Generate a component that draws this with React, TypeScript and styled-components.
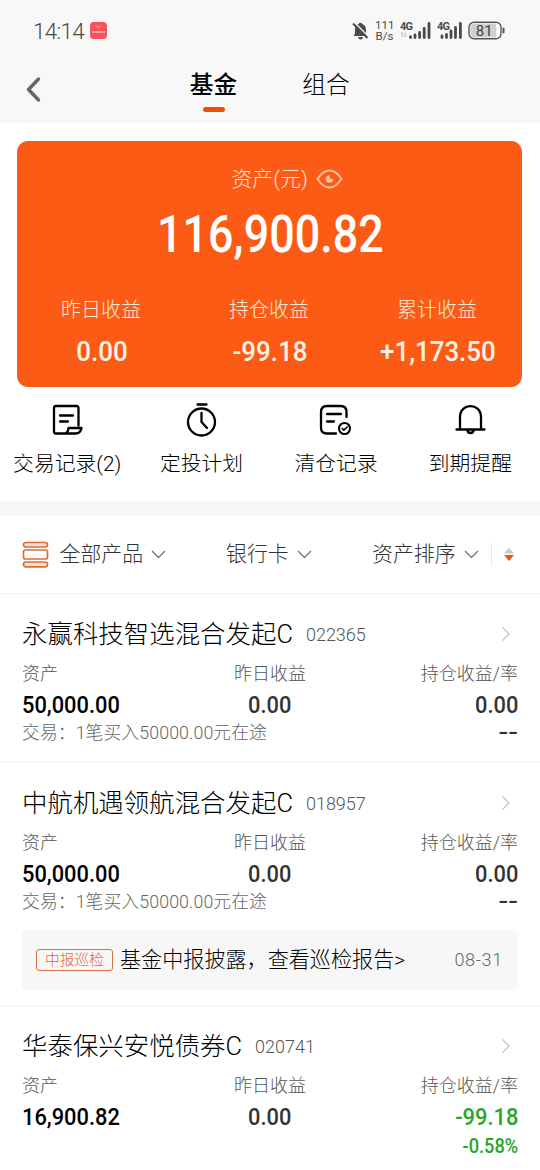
import React from "react";
import styled, { createGlobalStyle } from "styled-components";

const GlobalStyle = createGlobalStyle`
  * { box-sizing: border-box; }
  body {
    margin: 0;
    background: #fff;
    font-family: Roboto, "Noto Sans CJK SC", sans-serif;
    font-weight: 300;
  }
`;

const Screen = styled.div`
  width: 540px;
  height: 1170px;
  overflow: hidden;
  background: #fff;
  white-space: nowrap;
`;

const Header = styled.header`
  height: 123px;
  background: #f8f8f8;
`;

const StatusBar = styled.div`
  display: flex;
  align-items: center;
  height: 60px;
  padding: 1px 34px 0 33px;
  color: #4a4a4a;
`;

const Clock = styled.span`
  width: 57px;
  font-size: 22.5px;
  line-height: 24px;
  letter-spacing: -0.7px;
`;

const StatusIcons = styled.div`
  display: flex;
  align-items: center;
  margin-left: auto;
`;

const NetSpeed = styled.div`
  width: 19px;
  margin: 0 6px;
  font-size: 11.5px;
  font-weight: 400;
  line-height: 11px;
  text-align: center;

  > div { height: 11px; }
`;

const NavBar = styled.nav`
  display: flex;
  height: 63px;
  padding-left: 24px;
`;

const BackButton = styled.button`
  width: 24px;
  height: 30px;
  margin: 14px 141.5px 0 0;
  padding: 0;
  border: 0;
  background: none;
`;

const Tab = styled.div<{ $active?: boolean }>`
  display: flex;
  flex-direction: column;
  align-items: center;
  width: 48px;
  margin-right: 64.5px;
  padding-top: 8px;
  font-size: 23.7px;
  line-height: 34px;
  font-weight: ${(p) => (p.$active ? 500 : 300)};
  color: #000;

  &::after {
    content: "";
    width: 22px;
    height: 5px;
    margin-top: 5px;
    border-radius: 3px;
    background: ${(p) => (p.$active ? "#ee4d10" : "transparent")};
  }
`;

const AssetCard = styled.section`
  width: 505px;
  height: 246px;
  margin: 18px 0 0 17px;
  padding-top: 23px;
  border-radius: 11px;
  background: #fb5b14;
  color: #fff;
`;

const AssetLabel = styled.div`
  display: flex;
  align-items: center;
  justify-content: center;
  gap: 8px;
  height: 30px;
  padding-left: 35px;
  font-size: 21px;
  line-height: 30px;
  color: #ffe6d6;
`;

const AssetTotal = styled.div`
  height: 60px;
  margin-top: 11px;
  padding-left: 2px;
  text-align: center;
  font-size: 51px;
  line-height: 60px;
  font-weight: 500;
  transform: scaleX(0.88);
`;

const EarningGrid = styled.div`
  display: grid;
  grid-template-columns: repeat(3, 168px);
  margin-top: 30px;
`;

const Earning = styled.div`
  text-align: center;
  color: #ffe9d8;
`;

const EarningName = styled.div`
  font-size: 20px;
  line-height: 30px;
`;

const EarningValue = styled.div`
  margin-top: 9px;
  padding-left: 2px;
  font-size: 28px;
  line-height: 36px;
  font-weight: 500;
  color: #fff3e6;
  transform: scaleX(0.925);
`;

const Actions = styled.section`
  display: grid;
  grid-template-columns: repeat(4, 134.4px);
  height: 114px;
  padding-top: 16px;
`;

const Action = styled.div`
  display: flex;
  flex-direction: column;
  align-items: center;
  gap: 10px;
  font-size: 20.8px;
  line-height: 30px;
  color: #000;
`;

const Divider = styled.div`
  height: 15px;
  background: #f7f7f7;
`;

const FilterBar = styled.section`
  display: flex;
  align-items: center;
  height: 78px;
  padding: 0 22px;
  border-bottom: 1px solid #f0f0f0;
`;

const Filter = styled.div<{ $width: number }>`
  display: flex;
  align-items: center;
  width: ${(p) => p.$width}px;
  padding-bottom: 1px;
  font-size: 20.9px;
  line-height: 30px;
  color: #333;

  > svg:last-child { margin-left: 8px; }
`;

const ProductIcon = styled.svg`
  margin-right: 10.5px;
`;

const SortToggle = styled.div`
  display: flex;
  align-items: center;
  justify-content: flex-end;
  width: 24px;
  height: 23px;
  border-left: 1px solid #e9e9e9;
`;

const Fund = styled.article`
  padding: 24px 22px 11px;
  border-bottom: 1px solid #f4f4f4;
`;

const FundHead = styled.div`
  display: flex;
  align-items: center;
  height: 32px;
  margin-bottom: 12px;
`;

const FundName = styled.h2`
  margin: 0;
  font-size: 25.45px;
  line-height: 32px;
  font-weight: 300;
  color: #000;
`;

const FundCode = styled.span`
  margin: 1px auto 0 13px;
  font-size: 18px;
  line-height: 24px;
  color: #555;
`;

const Columns = styled.div`
  display: grid;
  grid-template-columns: 1fr 1fr 1fr;
`;

const Column = styled.div<{ $align: "left" | "center" | "right" }>`
  text-align: ${(p) => p.$align};
  transform-origin: ${(p) => p.$align};
`;

const ColumnName = styled.div`
  font-size: 18px;
  line-height: 24px;
  margin-bottom: 3px;
  color: #555;
`;

const Amount = styled.div<{ $color: string }>`
  font-size: 24px;
  line-height: 32px;
  font-weight: 500;
  color: ${(p) => p.$color};
  transform: scaleX(0.91);
  transform-origin: inherit;
`;

const FundFoot = styled.div`
  display: flex;
  justify-content: space-between;
  height: 24px;
  margin-bottom: 6px;
  font-size: 17.8px;
  line-height: 24px;
  letter-spacing: 0.1px;
  color: #666;
`;

const Rate = styled.span<{ $color: string }>`
  margin-left: auto;
  font-size: 20px;
  line-height: 27px;
  font-weight: 500;
  letter-spacing: 0;
  color: ${(p) => p.$color};
  transform: scaleX(0.91);
  transform-origin: right;
`;

const NoRate = styled.span`
  font-size: 22px;
  font-weight: 500;
  letter-spacing: 0;
  color: #333;
  transform: scaleX(1.3);
  transform-origin: right;
`;

const Notice = styled.div`
  display: flex;
  align-items: center;
  height: 60px;
  margin: 16px 0 4px;
  padding: 0 15px 0 14px;
  border-radius: 6px;
  background: #f7f7f7;
`;

const NoticeTag = styled.span`
  width: 77px;
  height: 22px;
  margin-right: 7px;
  border: 1px solid #dc7346;
  border-radius: 3px;
  text-align: center;
  font-size: 14.7px;
  line-height: 20px;
  color: #e2662f;
`;

const NoticeText = styled.span`
  font-size: 21.1px;
  line-height: 30px;
  color: #000;
`;

const NoticeDate = styled.span`
  margin: -1px 0 0 auto;
  font-size: 18px;
  letter-spacing: 0.7px;
  color: #666;
`;

const SignalBars = ({ data }: { data?: boolean }) => (
  <svg width={data ? 37 : 26} height="20" viewBox={data ? "0 0 37 20" : "0 0 26 20"}>
    <text x="0" y="8.500" fontSize="11" fontWeight="700" letterSpacing="-0.7" fontFamily="Roboto" fill="#4a4a4a">4G</text>
    {data && <path d="M2.2 16v-4.500l-1.500 1.500M5 11.500V16l1.500-1.500" stroke="#b5b5b5" fill="none" />}
    <g
      transform={data ? "translate(9 -0.500)" : "translate(3.500 -0.500)"}
      stroke="#4a4a4a"
      strokeWidth="2.800"
      strokeLinecap="round"
    >
      {data ? (
        <path d="M1.500 17v-.8M6 17v-2.500M10.600 17v-5M15.200 17V8M20 17V3" />
      ) : (
        <path d="M1.500 17v-1.500M6 17v-3M10.500 17V10.500M15 17V7M19.900 17V3" />
      )}
    </g>
  </svg>
);

const Battery = styled.svg`
  margin-left: 5px;
`;

const Chevron = () => (
  <svg width="15" height="9" viewBox="0 0 15 9">
    <path d="M1 1l6.500 6.500L14 1" fill="none" stroke="#777" strokeWidth="1.4" />
  </svg>
);

const RowArrow = () => (
  <svg width="17" height="16" viewBox="0 0 17 16">
    <path d="M1.500 1.500L8 8l-6.500 6.500" fill="none" stroke="#c4c4c4" strokeWidth="1.3" />
  </svg>
);

const iconStroke = { fill: "none", stroke: "#000", strokeWidth: 2.3, strokeLinecap: "round", strokeLinejoin: "round" } as const;

const RecordIcon = () => (
  <svg width="34" height="36" viewBox="0 0 34 36" {...iconStroke}>
    <path d="M28.500 22.500V5Q28.500 3 26.500 3H6Q4 3 4 5V28.500Q4 30.500 6 30.500H25.500Q30.500 30.500 31.500 25H18.500Q18 30.500 14 30.500" />
    <path d="M10 12.500H23M10 18.500H18" />
  </svg>
);

const TimerIcon = () => (
  <svg width="34" height="36" viewBox="0 0 34 36" {...iconStroke}>
    <circle cx="16.500" cy="19" r="13.500" />
    <path d="M12.500 1.500H21.500M16.500 10V19L22 25" />
  </svg>
);

const ClearedIcon = () => (
  <svg width="34" height="36" viewBox="0 0 34 36" {...iconStroke}>
    <path d="M27.500 14V9Q27.500 3 21.500 3H8Q2 3 2 9V24.500Q2 30.500 8 30.500H17" />
    <path d="M8 11H22M8 18.500H15" />
    <circle cx="25.500" cy="25.500" r="5.500" strokeWidth="2.100" />
    <path d="M23.200 25.500l1.700 1.700 3.200-3.200" strokeWidth="1.700" />
  </svg>
);

const BellIcon = () => (
  <svg width="34" height="36" viewBox="0 0 34 36" {...iconStroke}>
    <path d="M3.500 26.500H31.500M7 26V14C7 -0.500 28 -0.500 28 14V26" />
    <path d="M14.500 27.500Q15 30 17.500 30T20.500 27.500" strokeWidth="2.500" />
  </svg>
);

type FundItem = {
  name: string;
  code: string;
  asset: string;
  holding: string;
  rate?: string;
  trade?: string;
  notice?: boolean;
};

const funds: FundItem[] = [
  { name: "永赢科技智选混合发起C", code: "022365", asset: "50,000.00", holding: "0.00", trade: "交易：1笔买入50000.00元在途" },
  { name: "中航机遇领航混合发起C", code: "018957", asset: "50,000.00", holding: "0.00", trade: "交易：1笔买入50000.00元在途", notice: true },
  { name: "华泰保兴安悦债券C", code: "020741", asset: "16,900.82", holding: "-99.18", rate: "-0.58%" },
];

const earnings = [
  ["昨日收益", "0.00"],
  ["持仓收益", "-99.18"],
  ["累计收益", "+1,173.50"],
];

const FundRow = ({ fund }: { fund: FundItem }) => (
  <Fund>
    <FundHead>
      <FundName>{fund.name}</FundName>
      <FundCode>{fund.code}</FundCode>
      <RowArrow />
    </FundHead>
    <Columns>
      <Column $align="left">
        <ColumnName>资产</ColumnName>
        <Amount $color="#000">{fund.asset}</Amount>
      </Column>
      <Column $align="center">
        <ColumnName>昨日收益</ColumnName>
        <Amount $color="#333">0.00</Amount>
      </Column>
      <Column $align="right">
        <ColumnName>持仓收益/率</ColumnName>
        <Amount $color={fund.rate ? "#27a52b" : "#333"}>{fund.holding}</Amount>
      </Column>
    </Columns>
    <FundFoot>
      {fund.trade && <span>{fund.trade}</span>}
      {fund.rate ? <Rate $color="#27a52b">{fund.rate}</Rate> : <NoRate>--</NoRate>}
    </FundFoot>
    {fund.notice && (
      <Notice>
        <NoticeTag>中报巡检</NoticeTag>
        <NoticeText>基金中报披露，查看巡检报告&gt;</NoticeText>
        <NoticeDate>08-31</NoticeDate>
      </Notice>
    )}
  </Fund>
);

export default function App() {
  return (
    <Screen>
      <GlobalStyle />
      <Header>
        <StatusBar>
          <Clock>14:14</Clock>
          <svg width="17" height="17" viewBox="0 0 17 17">
            <rect width="17" height="17" rx="4" fill="#f9505c" />
            <path d="M5.500 3.500Q8.500 7 11 3.500" fill="none" stroke="#ffc4c8" strokeWidth=".8" />
            <path d="M2.500 10H15" stroke="#ffd6d8" strokeWidth="1.500" strokeDasharray="1.500 .4" />
          </svg>
          <StatusIcons>
            <svg width="17" height="18" viewBox="0 0 17 18">
              <path d="M1.500 14L3 11.500V7Q3.500 2.500 7 2V1H10V2Q14 3 14 8V11.500L16 14ZM6 15H11Q10.500 17.500 8.500 17.500T6 15Z" fill="#4a4a4a" />
              <path d="M2 0L17 15" stroke="#f8f8f8" strokeWidth="1.500" />
              <path d="M1 1.500L15.500 16" stroke="#4a4a4a" strokeWidth="1.900" />
            </svg>
            <NetSpeed>
              <div>111</div>
              <div>B/s</div>
            </NetSpeed>
            <SignalBars data />
            <SignalBars />
            <Battery width="38" height="20" viewBox="0 0 38 20">
              <rect x="1" y="1.200" width="32" height="16.600" rx="5" fill="#fff" stroke="#555" strokeWidth="1.400" />
              <path d="M6.300 2.500H28.300V16.500H6.300Q2.300 16.500 2.300 12.500V6.500Q2.300 2.500 6.300 2.500" fill="#d0d0d0" />
              <path d="M35.500 7.500V11.500" stroke="#555" strokeWidth="2" strokeLinecap="round" />
              <text x="16.300" y="14.800" textAnchor="middle" fontFamily="Roboto" fontSize="15" fontWeight="400" fill="#444">81</text>
            </Battery>
          </StatusIcons>
        </StatusBar>
        <NavBar>
          <BackButton aria-label="返回">
            <svg width="24" height="30" viewBox="0 0 24 30">
              <path d="M14.500 5L4.500 15.500L14.500 26" fill="none" stroke="#666" strokeWidth="3.400" strokeLinecap="round" strokeLinejoin="round" />
            </svg>
          </BackButton>
          <Tab $active>基金</Tab>
          <Tab>组合</Tab>
        </NavBar>
      </Header>

      <AssetCard>
        <AssetLabel>
          资产(元)
          <svg width="27" height="20" viewBox="0 0 27 20" fill="none" stroke="#ffc0a0" strokeWidth="2">
            <path d="M1.500 10Q7 1.500 13.500 1.500T25.500 10Q20 18.500 13.500 18.500T1.500 10Z" />
            <path d="M13.500 6.200A3.800 3.800 0 1 0 17.300 10L14 9.800Z" fill="#ffc0a0" stroke="none" />
          </svg>
        </AssetLabel>
        <AssetTotal>116,900.82</AssetTotal>
        <EarningGrid>
          {earnings.map(([name, value]) => (
            <Earning key={name}>
              <EarningName>{name}</EarningName>
              <EarningValue>{value}</EarningValue>
            </Earning>
          ))}
        </EarningGrid>
      </AssetCard>

      <Actions>
        <Action><RecordIcon />交易记录(2)</Action>
        <Action><TimerIcon />定投计划</Action>
        <Action><ClearedIcon />清仓记录</Action>
        <Action><BellIcon />到期提醒</Action>
      </Actions>
      <Divider />

      <FilterBar>
        <Filter $width={204}>
          <ProductIcon width="27" height="27" viewBox="0 0 27 27" fill="#fde0cf" stroke="#dc6c3a" strokeWidth="1.700">
            <rect x="1.500" y="1.500" width="24" height="4.500" rx="2.200" />
            <rect x="1.500" y="9" width="24" height="9" rx="2" fill="#fff" />
            <rect x="1.500" y="21" width="24" height="4.800" rx="2.200" />
          </ProductIcon>
          全部产品
          <Chevron />
        </Filter>
        <Filter $width={146}>银行卡<Chevron /></Filter>
        <Filter $width={119}>资产排序<Chevron /></Filter>
        <SortToggle>
          <svg width="12" height="14" viewBox="0 0 12 14">
            <path d="M6 0L11 5.500H1Z" fill="#c8c8c8" />
            <path d="M1 7H11L6 13Z" fill="#e4551c" />
          </svg>
        </SortToggle>
      </FilterBar>

      {funds.map((fund) => (
        <FundRow key={fund.code} fund={fund} />
      ))}
    </Screen>
  );
}
